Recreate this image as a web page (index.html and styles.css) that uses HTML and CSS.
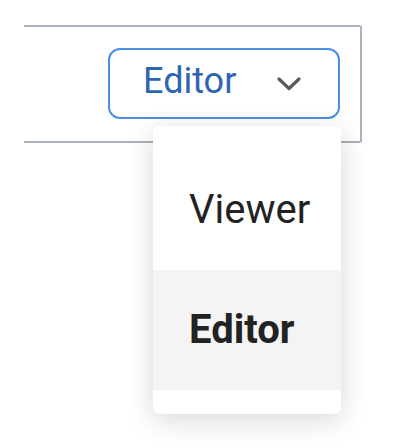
FILE: index.html
```html
<html>
  <head>
    <meta name="viewport" content="width=device-width, initial-scale=1" />
    <link rel="stylesheet" href="styles.css">
  </head>
  <body>
    <div class="panel">
      <div class="role-select">
        <button class="role-button">
          <span class="role-label">Editor</span>
          <svg class="chevron" width="24" height="14" viewBox="0 0 24 14">
            <path d="M2 2 L12 11.5 L22 2" fill="none" stroke="#5a5a5a" stroke-width="3.2" stroke-linecap="round" stroke-linejoin="round"/>
          </svg>
        </button>
        <ul class="role-menu">
          <li class="role-item">Viewer</li>
          <li class="role-item selected">Editor</li>
        </ul>
      </div>
    </div>
  </body>
</html>
```

FILE: styles.css
```css
body {
	margin: 0;
	background: #fff;
	font-family: Roboto, "Noto Sans", sans-serif;
}

.panel {
	display: flex;
	justify-content: flex-end;
	align-items: flex-start;
	box-sizing: border-box;
	margin: 25px 0 0 24px;
	width: 338px;
	height: 118px;
	padding: 21px 20px 0 0;
	border: 2px solid #aab3bb;
	border-left: none;
	border-radius: 0 3px 3px 0;
}

.role-select {
	position: relative;
}

.role-button {
	display: flex;
	align-items: center;
	box-sizing: border-box;
	width: 232px;
	height: 71px;
	padding: 0 37px 6px 33px;
	margin: 0;
	background: #fff;
	border: 2px solid #4a8fe0;
	border-radius: 12px;
	font-family: inherit;
	cursor: pointer;
}

.role-label {
	flex: 1;
	text-align: left;
	font-size: 36px;
	color: #2f64b0;
}

.chevron {
	margin-top: 6px;
}

.role-menu {
	position: absolute;
	top: calc(100% + 7px);
	right: -1px;
	width: 188px;
	margin: 0;
	padding: 24px 0;
	list-style: none;
	background: #fff;
	border-radius: 6px;
	box-shadow: 0 6px 28px rgba(0, 0, 0, 0.16);
}

.role-item {
	display: flex;
	align-items: center;
	height: 120px;
	padding: 0 0 2px 36px;
	box-sizing: border-box;
	font-size: 40px;
	color: #222;
}

.role-item.selected {
	background: #f4f4f4;
	font-weight: bold;
}
```
